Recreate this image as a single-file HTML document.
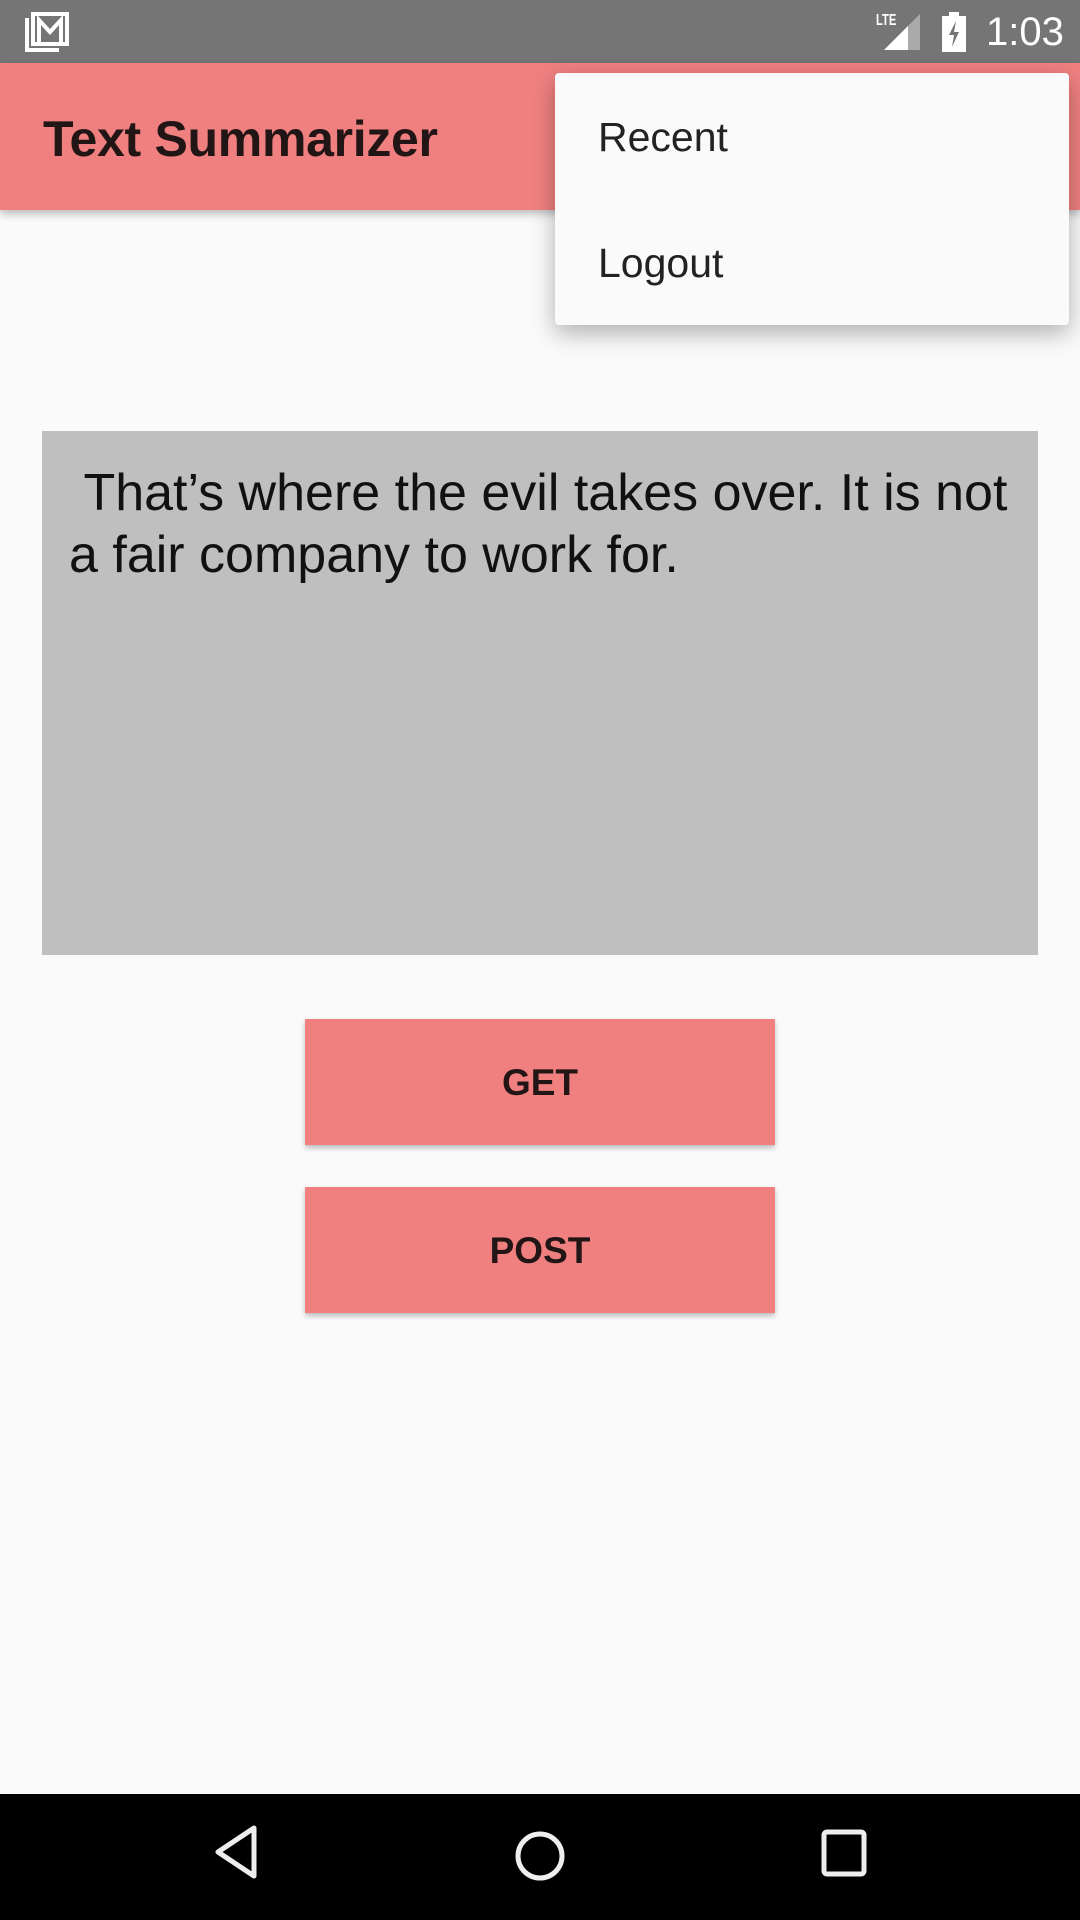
<!DOCTYPE html>
<html><head><meta charset="utf-8"><style>
*{margin:0;padding:0;box-sizing:border-box}
body{width:1080px;height:1920px;background:#fafafa;position:relative;overflow:hidden;font-family:"Liberation Sans",sans-serif}
.status{position:absolute;left:0;top:0;width:1080px;height:63px;background:#757575}
.appbar{position:absolute;left:0;top:63px;width:1080px;height:147px;background:#f08080;box-shadow:0 4px 8px rgba(0,0,0,.25)}
.title{position:absolute;left:43px;top:110px;font-size:50px;font-weight:bold;color:#221515;letter-spacing:-0.3px}
.menu{position:absolute;left:555px;top:73px;width:514px;height:252px;background:#fafafa;border-radius:4px;box-shadow:0 8px 24px rgba(0,0,0,.3)}
.menu div{position:absolute;left:43px;font-size:41px;color:#222}
.box{position:absolute;left:42px;top:431px;width:996px;height:524px;background:#bfbfbf}
.box p{position:absolute;left:27px;top:31px;width:950px;font-size:52px;line-height:62px;color:#111}
.btn{position:absolute;left:305px;width:470px;height:126px;background:#f08080;box-shadow:0 3px 5px rgba(0,0,0,.25);text-align:center;line-height:128px;font-size:37px;font-weight:bold;color:#221515}
.nav{position:absolute;left:0;top:1794px;width:1080px;height:126px;background:#000}
</style></head><body>
<div class="status">
<svg style="position:absolute;left:24px;top:12px" width="48" height="40" viewBox="0 0 48 40"><path d="M3 6v32h32" fill="none" stroke="#fff" stroke-width="4"/><rect x="9" y="2" width="34" height="30" fill="none" stroke="#fff" stroke-width="4"/><path d="M15 30V8l11 12 11-12v22" fill="none" stroke="#fff" stroke-width="4"/></svg>
<div style="position:absolute;left:876px;top:12px;font-size:16px;font-weight:bold;color:#fff;transform:scaleX(.7);transform-origin:left">LTE</div>
<svg style="position:absolute;left:884px;top:14px" width="40" height="38"><polygon points="36,0 36,36 0,36" fill="#aaa"/><polygon points="24,12 24,36 0,36" fill="#fff"/></svg>
<svg style="position:absolute;left:942px;top:12px" width="24" height="40"><rect x="7" y="0" width="10" height="4" fill="#fff"/><rect x="0" y="4" width="24" height="36" fill="#fff"/><path d="M14 9l-7 14h5l-2 12 7-15h-5z" fill="#757575"/></svg>
<div style="position:absolute;left:986px;top:10px;font-size:40px;color:#fff">1:03</div>
</div>
<div class="appbar"></div>
<div class="title">Text Summarizer</div>
<div class="menu"><div style="top:41px">Recent</div><div style="top:167px">Logout</div></div>
<div class="box"><p>&nbsp;That’s where the evil takes over. It is not a fair company to work for.</p></div>
<div class="btn" style="top:1019px">GET</div>
<div class="btn" style="top:1187px">POST</div>
<div class="nav">
<svg style="position:absolute;left:210px;top:30px" width="50" height="56"><path d="M44 4L8 28l36 24z" fill="none" stroke="#eee" stroke-width="5" stroke-linejoin="round"/></svg>
<svg style="position:absolute;left:512px;top:34px" width="56" height="56"><circle cx="28" cy="28" r="22" fill="none" stroke="#eee" stroke-width="5"/></svg>
<svg style="position:absolute;left:820px;top:34px" width="50" height="50"><rect x="4" y="4" width="40" height="42" rx="3" fill="none" stroke="#eee" stroke-width="5"/></svg>
</div>
</body></html>
